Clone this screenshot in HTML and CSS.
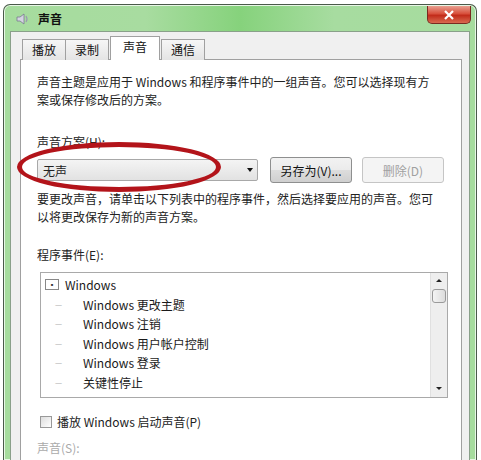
FILE: index.html
```html
<!DOCTYPE html>
<html lang="zh">
<head>
<meta charset="utf-8">
<link rel="stylesheet" href="styles.css">
</head>
<body>
<div class="window">
  <div class="titlebar">
    <svg class="ticon" width="16" height="16" viewBox="0 0 16 16">
      <path d="M2 6h3l4-3v10l-4-3H2z" fill="#d4d4e2" stroke="#7a7a90" stroke-width="0.8"/>
      <path d="M11 5q2 3 0 6" fill="none" stroke="#9a9ab0" stroke-width="1.2"/>
    </svg>
    <span class="title">声音</span>
    <div class="close">
      <svg width="12" height="10" viewBox="0 0 12 10"><path d="M2 1l8 8M10 1l-8 8" stroke="#fff" stroke-width="2.2"/></svg>
    </div>
  </div>
  <div class="client">
    <div class="tabs">
      <div class="tab">播放</div>
      <div class="tab">录制</div>
      <div class="tab active">声音</div>
      <div class="tab">通信</div>
    </div>
    <div class="panel">
      <p class="desc">声音主题是应用于 Windows 和程序事件中的一组声音。您可以选择现有方案或保存修改后的方案。</p>
      <div class="label scheme-label">声音方案(H):</div>
      <div class="scheme-row">
        <div class="combo">
          <span>无声</span>
          <span class="arrow"></span>
          <div class="ring"></div>
        </div>
        <button class="btn">另存为(V)...</button>
        <button class="btn disabled">删除(D)</button>
      </div>
      <p class="desc desc2">要更改声音，请单击以下列表中的程序事件，然后选择要应用的声音。您可以将更改保存为新的声音方案。</p>
      <div class="label events-label">程序事件(E):</div>
      <div class="list">
        <div class="items">
          <div class="item root"><span class="box">▪</span>Windows</div>
          <div class="item"><span class="dash">—</span>Windows 更改主题</div>
          <div class="item"><span class="dash">—</span>Windows 注销</div>
          <div class="item"><span class="dash">—</span>Windows 用户帐户控制</div>
          <div class="item"><span class="dash">—</span>Windows 登录</div>
          <div class="item"><span class="dash">—</span>关键性停止</div>
        </div>
        <div class="scroll">
          <span class="up"></span>
          <span class="thumb"></span>
          <span class="track"></span>
          <span class="down"></span>
        </div>
      </div>
      <label class="check"><span class="cb"></span>播放 Windows 启动声音(P)</label>
      <div class="label grey">声音(S):</div>
    </div>
  </div>
</div>
</body>
</html>
```
FILE: styles.css
```css
* { box-sizing: border-box; }
html, body { margin: 0; padding: 0; background: #fff; overflow: hidden; }
body {
  font-family: "Noto Sans CJK SC", "Noto Sans", sans-serif;
  font-size: 12px;
  color: #222;
  width: 481px;
  height: 460px;
}
.window {
  margin: 4px 4px 0 3px;
  height: 456px;
  overflow: hidden;
  border: 1px solid #4a5a4a;
  border-bottom: none;
  border-radius: 7px 7px 0 0;
  background: linear-gradient(90deg, #a6dc9e 0%, #a8dca0 30%, #86d27c 50%, #a7dca0 70%, #a6dc9e 100%);
  padding: 0 6px;
  box-shadow: inset 0 0 0 1px #e8f6e6;
}
.titlebar {
  height: 26px;
  display: flex;
  align-items: center;
  padding-left: 5px;
}
.ticon { margin-right: 7px; margin-top: 1px; }
.title { font-weight: bold; font-size: 12px; color: #111; flex: 1; }
.close {
  width: 44px;
  height: 18px;
  margin-top: -6px;
  border: 1px solid #7a2a20;
  border-top: none;
  border-radius: 0 0 5px 5px;
  background: linear-gradient(180deg, #e8a090 0%, #d8503c 45%, #c22c1a 55%, #d86a50 100%);
  display: flex;
  align-items: center;
  justify-content: center;
  margin-right: -1px;
}
.client {
  background: #f0f0f0;
  border: 1px solid #8aa08a;
  height: 440px;
  padding: 3px 7px 0 9px;
}
.tabs { display: flex; align-items: flex-end; height: 25px; padding-left: 2px; }
.tab {
  height: 21px;
  padding: 0 9px;
  border: 1px solid #a0a0a0;
  border-bottom: none;
  background: linear-gradient(180deg, #f6f6f6, #e4e4e4);
  font-size: 12px;
  line-height: 20px;
  margin-right: -1px;
  color: #111;
}
.tab.active {
  height: 24px;
  background: #fff;
  padding: 0 12px;
  margin: 0 1px 0 2px;
  position: relative;
  z-index: 1;
  line-height: 20px;
}
.panel {
  margin-top: -1px;
  background: #fff;
  border: 1px solid #a0a0a0;
  height: 420px;
  padding: 13px 16px 0 16px;
}
.desc { margin: 0; line-height: 18px; color: #222; width: 398px; }
.label { line-height: 16px; }
.scheme-label { margin-top: 25px; }
.scheme-row { display: flex; align-items: center; margin-top: 7px; }
.combo {
  position: relative;
  width: 221px;
  height: 22px;
  border: 1px solid #a8a8a8;
  border-radius: 2px;
  background: linear-gradient(180deg, #f4f4f4, #e2e2e2);
  display: flex;
  align-items: center;
  padding-left: 5px;
}
.combo span:first-child { flex: 1; }
.arrow {
  width: 0; height: 0;
  border-left: 3.5px solid transparent;
  border-right: 3.5px solid transparent;
  border-top: 4px solid #111;
  margin-right: 4px;
}
.ring {
  position: absolute;
  left: -21px;
  top: -18px;
  width: 204px;
  height: 50px;
  border: 5px solid #b3141a;
  border-radius: 50%;
}
.btn {
  margin-left: 12px;
  width: 82px;
  height: 26px;
  font: inherit;
  font-size: 12px;
  color: #111;
  border: 1px solid #8e8f8f;
  border-radius: 3px;
  background: linear-gradient(180deg, #f2f2f2 0%, #ebebeb 50%, #dddddd 51%, #cfcfcf 100%);
  padding: 0;
}
.btn.disabled {
  margin-left: 10px;
  color: #a0a0a0;
  border-color: #c5c5c5;
  background: #f4f4f4;
}
.desc2 { margin-top: 7px; }
.events-label { margin-top: 21px; }
.list {
  margin-top: 9px;
  margin-left: 3px;
  width: 408px;
  height: 126px;
  border: 1px solid #a9a9a9;
  display: flex;
  background: #fff;
}
.items { flex: 1; padding-top: 2px; }
.item { height: 19.5px; line-height: 19px; display: flex; align-items: center; padding-left: 14px; color: #1a1a1a; }
.item.root { padding-left: 4px; }
.box {
  width: 14px; height: 11px;
  border: 1px solid #888;
  font-size: 7px;
  line-height: 9px;
  text-align: center;
  margin-right: 6px;
  color: #333;
}
.dash { color: #aaa; font-size: 8px; width: 28px; }
.scroll {
  width: 17px;
  display: flex;
  flex-direction: column;
  align-items: center;
  background: #eee;
  border-left: 1px solid #e0e0e0;
}
.up, .down {
  height: 16px; width: 100%;
  position: relative;
}
.up::after, .down::after {
  content: "";
  position: absolute;
  left: 5px;
  top: 6px;
  border-left: 3px solid transparent;
  border-right: 3px solid transparent;
}
.up::after { border-bottom: 3px solid #222; }
.down::after { border-top: 3px solid #222; }
.thumb {
  width: 14px; height: 14px;
  border: 1px solid #9a9a9a;
  border-radius: 3px;
  background: linear-gradient(90deg, #f4f4f4, #dcdcdc);
}
.track { flex: 1; }
.check { display: flex; align-items: center; margin-top: 15px; margin-left: 3px; }
.cb { width: 12px; height: 12px; border: 1px solid #999; background: linear-gradient(135deg,#ddd,#fff); margin-right: 5px; }
.grey { color: #aaa; margin-top: 10px; }
```
